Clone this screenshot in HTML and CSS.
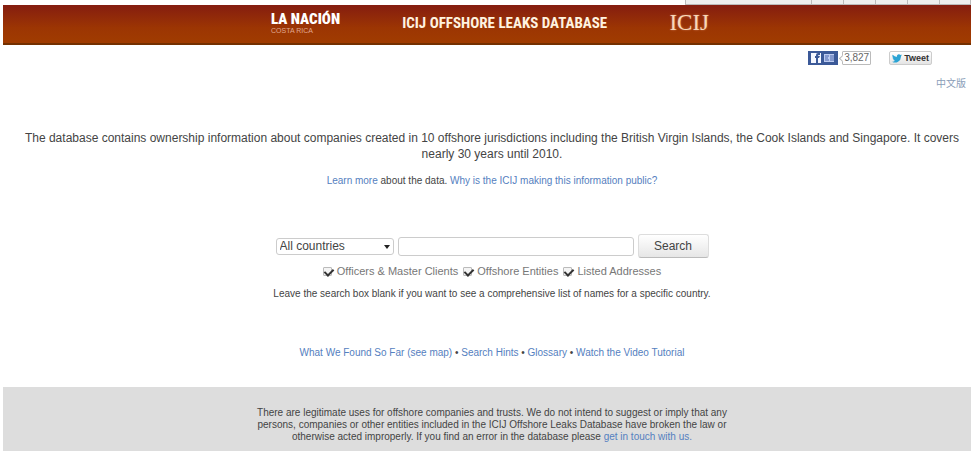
FILE: index.html
```html
<!DOCTYPE html>
<html lang="en">
<head>
    <meta charset="UTF-8">
    <meta name="viewport" content="width=device-width, initial-scale=1.0">
    <title>ICIJ Offshore Leaks Database</title>
    <link rel="stylesheet" href="styles.css">
</head>
<body>
    <!-- Window tabs -->
    <div class="tab-strip">
        <span class="tab tab-wide"></span>
        <span class="tab"></span>
        <span class="tab"></span>
        <span class="tab"></span>
        <span class="tab"></span>
        <span class="tab"></span>
    </div>

    <div class="page">
        <header class="header">
            <div class="header-inner">
                <div class="nacion">
                    <span class="nacion-name">LA NACIÓN</span>
                    <span class="nacion-country">COSTA RICA</span>
                </div>
                <h1>ICIJ OFFSHORE LEAKS DATABASE</h1>
                <div class="icij">ICIJ</div>
            </div>
        </header>

        <!-- Share buttons -->
        <div class="social">
            <button type="button" class="facebook" aria-label="Recommend">
                <svg width="30" height="14" viewBox="0 0 30 14">
                    <rect width="30" height="14" fill="#3b5998"/>
                    <rect x="3" y="2" width="10" height="10" fill="#f4f7ff"/>
                    <path d="M8 12V7H7V5h1V4q0-2 2-2h2v2h-1q-1 0-1 1h2l-1 2h-1v5z" fill="#3b5998"/>
                    <rect x="16" y="3" width="10" height="8" fill="#bccbf0"/>
                    <path d="M17 5h4M17 7h3M17 9h4M23 4v6M25 4v6" stroke="#4a67ad" stroke-width="1"/>
                </svg>
            </button>
            <span class="count">3,827</span>
            <button type="button" class="tweet">
                <svg width="10" height="9" viewBox="0 0 24 20">
                    <path d="M24 2.400a10 10 0 0 1-2.800.8A5 5 0 0 0 23.300.500a10 10 0 0 1-3.100 1.200A4.900 4.900 0 0 0 11.800 6.200 14 14 0 0 1 1.700 1a4.900 4.900 0 0 0 1.500 6.600 5 5 0 0 1-2.200-.6 4.900 4.900 0 0 0 3.900 4.900 5 5 0 0 1-2.200.1 4.900 4.900 0 0 0 4.600 3.400A9.900 9.900 0 0 1 0 17.500 14 14 0 0 0 21.500 5a10 10 0 0 0 2.500-2.600z" fill="#2aa3d4"/>
                </svg>
                Tweet
            </button>
        </div>
        <div class="language"><a href="#" lang="zh">中文版</a></div>

        <main>
            <p class="intro">The database contains ownership information about companies created in 10 offshore jurisdictions including the British Virgin Islands, the Cook Islands and Singapore. It covers nearly 30 years until 2010.</p>
            <p class="about"><a href="#">Learn more</a> about the data. <a href="#">Why is the ICIJ making this information public?</a></p>

            <form class="search">
                <div class="search-row">
                    <div class="country">
                        <select aria-label="Country">
                            <option>All countries</option>
                        </select>
                    </div>
                    <input type="text" class="query" aria-label="Search names">
                    <button type="submit" class="submit">Search</button>
                </div>
                <div class="filters">
                    <input type="checkbox" id="officers" checked>
                    <label for="officers">Officers &amp; Master Clients</label>
                    <input type="checkbox" id="entities" checked>
                    <label for="entities">Offshore Entities</label>
                    <input type="checkbox" id="addresses" checked>
                    <label for="addresses">Listed Addresses</label>
                </div>
                <p class="hint">Leave the search box blank if you want to see a comprehensive list of names for a specific country.</p>
            </form>

            <p class="links">
                <a href="#">What We Found So Far (see map)</a> •
                <a href="#">Search Hints</a> •
                <a href="#">Glossary</a> •
                <a href="#">Watch the Video Tutorial</a>
            </p>
        </main>

        <footer>
            <p>There are legitimate uses for offshore companies and trusts. We do not intend to suggest or imply that any persons, companies or other entities included in the ICIJ Offshore Leaks Database have broken the law or otherwise acted improperly. If you find an error in the database please <a href="#">get in touch with us.</a></p>
        </footer>
    </div>
</body>
</html>
```

FILE: styles.css
```css
* {
    box-sizing: border-box;
}

body {
    margin: 0;
    background-color: #fff;
    color: #444;
    font-family: "Liberation Sans", Arial, sans-serif;
    font-size: 10px;
    line-height: 12px;
}

a {
    color: #5580c0;
    text-decoration: none;
}

p, h1 {
    margin: 0;
}

.tab-strip {
    display: flex;
    justify-content: flex-end;
    height: 5px;
    padding-right: 1px;
}

.tab {
    width: 32px;
    background-color: #eee;
    border-left: 1px solid #bbb;
    border-bottom: 1px solid #bbb;
}

.tab:last-child {
    border-right: 1px solid #bbb;
}

.tab-wide {
    width: 126px;
}

.page {
    margin: 0 1px 0 3px;
}

/* Header */
.header {
    height: 40px;
    padding-left: 6px;
    background: linear-gradient(#851d10, #9c3503 60%, #a03c00);
    border-bottom: 2px solid #743000;
}

.header-inner {
    display: flex;
    justify-content: space-between;
    align-items: center;
    max-width: 438px;
    height: 36px;
    margin: 0 auto;
    color: #fff;
}

.nacion {
    display: flex;
    flex-direction: column;
    font-family: "Roboto Condensed", Roboto, sans-serif;
}

.nacion-name {
    font-size: 15px;
    line-height: 15px;
    font-weight: 900;
}

.nacion-country {
    color: #e0a890;
    font-family: "Liberation Sans", sans-serif;
    font-size: 7px;
    line-height: 8px;
}

h1 {
    color: #fff3e0;
    font-family: "Roboto Condensed", Roboto, sans-serif;
    font-size: 15px;
    font-weight: bold;
    white-space: nowrap;
}

.icij {
    color: #f8d8b8;
    font-family: "Liberation Serif", serif;
    font-size: 23px;
    text-shadow: 0 0 2px #d08060;
}

/* Share buttons */
.social {
    display: flex;
    justify-content: flex-end;
    align-items: center;
    margin-top: 6px;
    padding-right: 39px;
}

.facebook {
    display: flex;
    padding: 0;
    border: 0;
    background: none;
}

.count {
    position: relative;
    height: 14px;
    margin: 0 18px 0 4px;
    padding: 0 1px;
    border: 1px solid #bbb;
    border-radius: 1px;
    color: #666;
}

.count::before {
    content: "";
    position: absolute;
    left: -3px;
    top: 4px;
    width: 4px;
    height: 4px;
    background-color: #fff;
    border-left: 1px solid #bbb;
    border-bottom: 1px solid #bbb;
    transform: rotate(45deg);
}

.tweet {
    display: flex;
    align-items: center;
    gap: 2px;
    height: 14px;
    padding: 0 2px;
    border: 1px solid #ccc;
    border-radius: 2px;
    background: linear-gradient(#fff, #e4e4e4);
    color: #333;
    font-family: inherit;
    font-size: 9px;
    font-weight: bold;
}

.language {
    margin-top: 13px;
    padding-right: 5px;
    text-align: right;
    font-family: "Liberation Sans", "Noto Sans CJK SC", sans-serif;
}

.language a {
    color: #8a9db8;
}

/* Main */
main {
    padding: 40px 10px 28px 20px;
    text-align: center;
}

.intro {
    font-size: 12px;
    line-height: 16px;
}

.about {
    margin-top: 13px;
}

.search {
    margin-top: 47px;
}

.search-row {
    display: flex;
    justify-content: center;
    align-items: center;
    gap: 4px;
}

.country {
    position: relative;
    width: 118px;
}

.country::after {
    content: "";
    position: absolute;
    right: 4px;
    top: 7px;
    border: 3px solid transparent;
    border-top: 4px solid #222;
    border-bottom: 0;
    pointer-events: none;
}

.country select {
    display: block;
    width: 100%;
    height: 17px;
    padding: 0 3px;
    appearance: none;
    border: 1px solid #ccc;
    border-radius: 3px;
    background-color: #fff;
    color: #444;
    font-family: inherit;
    font-size: 12px;
}

.query {
    width: 236px;
    height: 19px;
    padding: 0 4px;
    border: 1px solid #ccc;
    border-radius: 3px;
    font-family: inherit;
    font-size: 12px;
}

.submit {
    width: 71px;
    height: 24px;
    padding: 0;
    border: 1px solid #ddd;
    border-bottom-color: #bbb;
    border-radius: 3px;
    background: linear-gradient(#fff, #e6e6e6);
    color: #444;
    font-family: inherit;
    font-size: 12px;
}

.filters {
    display: flex;
    justify-content: center;
    align-items: center;
    gap: 5px;
    margin-top: 7px;
    color: #777;
    font-size: 11px;
}

.filters input {
    position: relative;
    width: 9px;
    height: 9px;
    margin: 0;
    appearance: none;
    border: 1px solid #bbb;
    border-radius: 1px;
    background-color: #f4f4f4;
}

.filters input:checked::after {
    content: "";
    position: absolute;
    left: 2px;
    top: -1px;
    width: 4px;
    height: 7px;
    border-right: 2px solid #333;
    border-bottom: 2px solid #333;
    transform: rotate(45deg);
}

.hint {
    margin-top: 11px;
}

.links {
    margin-top: 47px;
}

/* Footer */
footer {
    padding: 20px 10px 8px 20px;
    background-color: #ddd;
    text-align: center;
}

footer p {
    max-width: 480px;
    margin: 0 auto;
}
```
